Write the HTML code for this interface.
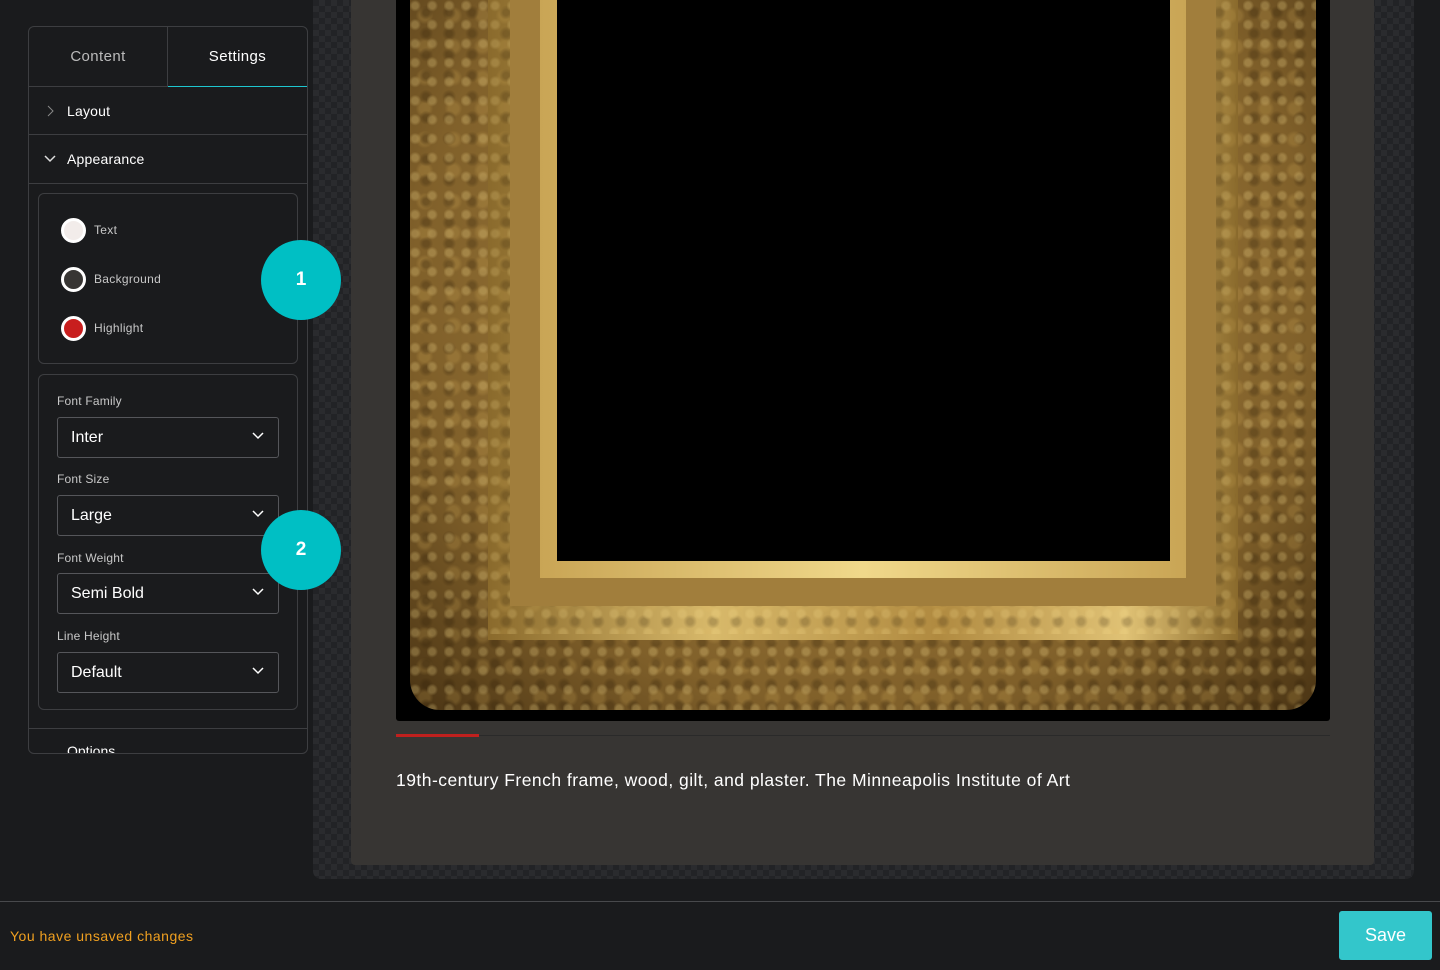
<!DOCTYPE html>
<html><head><style>
*{box-sizing:border-box;margin:0;padding:0}
body{width:1440px;height:970px;background:#1a1b1d;font-family:"Liberation Sans",sans-serif;position:relative;overflow:hidden;color:#fff}
.abs{position:absolute}
.checker{left:313px;top:0;width:1101px;height:879px;background-color:#222326;background-image:linear-gradient(45deg,#2a2b2e 25%,transparent 25%,transparent 75%,#2a2b2e 75%),linear-gradient(45deg,#2a2b2e 25%,transparent 25%,transparent 75%,#2a2b2e 75%);background-size:12px 12px;background-position:0 0,6px 6px;border-radius:0 0 8px 8px}
.card{left:351px;top:0;width:1023px;height:865px;background:#373533;border-radius:0 0 4px 4px}
.panel{left:28px;top:26px;width:280px;height:728px;border:1px solid #3d3e41;border-radius:6px;background:#1a1b1d;overflow:hidden}
.row{border-bottom:1px solid #3d3e41;height:49px;display:flex;align-items:center;padding-left:38px;font-size:14px;position:relative;letter-spacing:0.2px}
.box{position:absolute;left:9px;border:1px solid #3d3e41;border-radius:6px;width:260px}
.sw{position:absolute;left:22px;width:25px;height:25px;border-radius:50%;border:3px solid #fff}
.swl{position:absolute;left:55px;font-size:12px;color:#c8c8c8;letter-spacing:0.3px}
.lbl{position:absolute;left:18px;font-size:12px;color:#c8c8c8;letter-spacing:0.2px}
.sel{position:absolute;left:18px;width:222px;height:41px;border:1px solid #55565a;border-radius:3px;font-size:16px;padding-left:13px;line-height:39px}
.sel svg{position:absolute;right:14px;top:14px}
.badge{width:80px;height:80px;border-radius:50%;background:#00bfc4;color:#fff;font-weight:bold;font-size:19px;display:flex;align-items:center;justify-content:center}
.orn{background-image:radial-gradient(circle at 30% 30%,rgba(255,230,150,.55) 0 3px,transparent 6px),radial-gradient(circle at 70% 60%,rgba(40,25,5,.6) 0 3px,transparent 7px),radial-gradient(circle at 50% 50%,rgba(230,190,100,.4) 0 5px,transparent 9px);background-size:17px 19px,23px 21px,29px 31px}
</style></head><body>
<div class="abs checker"></div>
<div class="abs card"></div>
<div class="abs" style="left:396px;top:0;width:934px;height:721px;background:#000;border-radius:0 0 3px 3px"></div>
<div class="abs" style="left:410px;top:0;width:906px;height:710px;border-radius:0 0 30px 30px;background:radial-gradient(ellipse at 50% 40%,#b08a45,#80602a 70%,#4a3414);"></div>
<div class="abs orn" style="left:410px;top:0;width:906px;height:710px;border-radius:0 0 30px 30px;opacity:.45"></div>
<div class="abs" style="left:488px;top:0;width:750px;height:640px;background:linear-gradient(90deg,#8a6a2c,#d8b96a 30%,#b08a40 60%,#e0c275 85%,#8a6a2c);"></div>
<div class="abs orn" style="left:490px;top:0;width:746px;height:634px;opacity:.35"></div>
<div class="abs" style="left:510px;top:0;width:706px;height:606px;background:#a17e3c"></div>
<div class="abs" style="left:540px;top:0;width:646px;height:578px;background:linear-gradient(90deg,#c9a555,#f0d88a,#c9a555)"></div>
<div class="abs" style="left:557px;top:0;width:613px;height:561px;background:#000"></div>
<div class="abs" style="left:396px;top:735px;width:934px;height:1px;background:#2a2a2a"></div>
<div class="abs" style="left:396px;top:734px;width:83px;height:3px;background:#c0201e"></div>
<div class="abs" style="left:396px;top:770px;font-size:17.5px;letter-spacing:0.47px;color:#fff">19th-century French frame, wood, gilt, and plaster. The Minneapolis Institute of Art</div>

<div class="abs panel">
 <div style="display:flex;height:60px;border-bottom:1px solid #3d3e41;position:relative">
  <div style="width:139px;border-right:1px solid #3d3e41;display:flex;align-items:center;justify-content:center;font-size:15px;color:#bbb;letter-spacing:0.4px">Content</div>
  <div style="flex:1;display:flex;align-items:center;justify-content:center;font-size:15px;letter-spacing:0.4px">Settings</div>
  <div class="abs" style="left:139px;right:0;bottom:-1px;height:1px;background:#1ec6cf"></div>
 </div>
 <div class="row" style="height:48px"><svg class="abs" style="left:17px" width="8" height="12"><path d="M2 1l5 5-5 5" stroke="#888" fill="none"/></svg>Layout</div>
 <div class="row"><svg class="abs" style="left:15px" width="12" height="8"><path d="M1 1l5 5 5-5" stroke="#ddd" fill="none" stroke-width="1.5"/></svg>Appearance</div>
 <div class="box" style="top:166px;height:171px">
  <div class="sw" style="top:24px;background:#f2ecea"></div><div class="swl" style="top:29px">Text</div>
  <div class="sw" style="top:73px;background:#373533"></div><div class="swl" style="top:78px">Background</div>
  <div class="sw" style="top:122px;background:#c81e1e"></div><div class="swl" style="top:127px">Highlight</div>
 </div>
 <div class="box" style="top:347px;height:336px">
  <div class="lbl" style="top:19px">Font Family</div>
  <div class="sel" style="top:42px">Inter<svg width="12" height="8"><path d="M1 1l5 5 5-5" stroke="#fff" fill="none" stroke-width="1.5"/></svg></div>
  <div class="lbl" style="top:97px">Font Size</div>
  <div class="sel" style="top:120px">Large<svg width="12" height="8"><path d="M1 1l5 5 5-5" stroke="#fff" fill="none" stroke-width="1.5"/></svg></div>
  <div class="lbl" style="top:176px">Font Weight</div>
  <div class="sel" style="top:198px">Semi Bold<svg width="12" height="8"><path d="M1 1l5 5 5-5" stroke="#fff" fill="none" stroke-width="1.5"/></svg></div>
  <div class="lbl" style="top:254px">Line Height</div>
  <div class="sel" style="top:277px">Default<svg width="12" height="8"><path d="M1 1l5 5 5-5" stroke="#fff" fill="none" stroke-width="1.5"/></svg></div>
 </div>
 <div class="abs" style="left:0;top:701px;width:280px;border-top:1px solid #3d3e41;height:30px;padding:14px 0 0 38px;font-size:14px">Options</div>
</div>
<div class="abs badge" style="left:261px;top:240px">1</div>
<div class="abs badge" style="left:261px;top:510px">2</div>

<div class="abs" style="left:0;top:901px;width:1440px;height:1px;background:#48494c"></div>
<div class="abs" style="left:10px;top:928px;font-size:14px;color:#f0a020;letter-spacing:0.5px">You have unsaved changes</div>
<div class="abs" style="left:1339px;top:911px;width:93px;height:49px;background:#33c6cb;border-radius:3px;display:flex;align-items:center;justify-content:center;font-size:18px;color:#fff">Save</div>
</body></html>
